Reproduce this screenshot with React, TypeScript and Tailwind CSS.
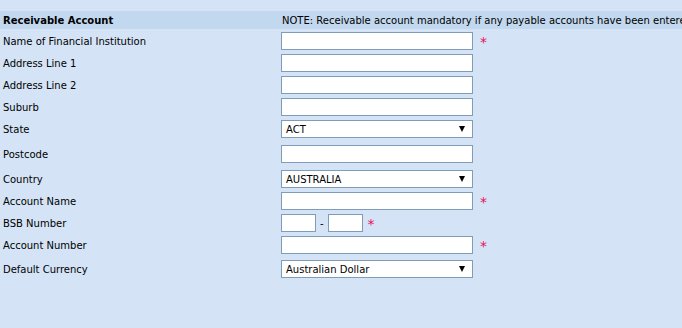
import React from "react";

type Field = {
  label: string;
  kind: "text" | "select" | "bsb";
  value?: string;
  required?: boolean;
  rowClass: string;
};

const fields: Field[] = [
  { label: "Name of Financial Institution", kind: "text", required: true, rowClass: "h-[22px]" },
  { label: "Address Line 1", kind: "text", rowClass: "h-[22px]" },
  { label: "Address Line 2", kind: "text", rowClass: "h-[22px]" },
  { label: "Suburb", kind: "text", rowClass: "h-[22px]" },
  { label: "State", kind: "select", value: "ACT", rowClass: "h-[22px]" },
  { label: "Postcode", kind: "text", rowClass: "h-[28px]" },
  { label: "Country", kind: "select", value: "AUSTRALIA", rowClass: "h-[22px]" },
  { label: "Account Name", kind: "text", required: true, rowClass: "h-[22px]" },
  { label: "BSB Number", kind: "bsb", required: true, rowClass: "h-[22px]" },
  { label: "Account Number", kind: "text", required: true, rowClass: "h-[22px]" },
  { label: "Default Currency", kind: "select", value: "Australian Dollar", rowClass: "h-[26px]" },
];

// red required marker
const Star = ({ gap }: { gap: string }) => (
  <span className={`${gap} text-[14px] leading-none text-[#e8105a] mt-[1px]`}>*</span>
);

const Control = ({ field }: { field: Field }) => {
  if (field.kind === "bsb") {
    return (
      <div className="flex items-center">
        <div className="w-[35px] h-[18px] bg-white border border-[#7f9db9]" />
        <span className="mx-[4px] text-[10px]">-</span>
        <div className="w-[35px] h-[18px] bg-white border border-[#7f9db9]" />
        {field.required && <Star gap="ml-[5px]" />}
      </div>
    );
  }
  if (field.kind === "select") {
    return (
      <div className="flex items-center">
        <div className="w-[192px] h-[18px] bg-white border border-[#7f9db9] flex items-center justify-between pl-[4px] pr-[7px]">
          <span className="text-[10px] leading-none mt-[1px]">{field.value}</span>
          <span className="w-0 h-0 border-l-[3px] border-r-[3px] border-t-[6px] border-l-transparent border-r-transparent border-t-black" />
        </div>
      </div>
    );
  }
  return (
    <div className="flex items-center">
      <div className="w-[192px] h-[18px] bg-white border border-[#7f9db9]" />
      {field.required && <Star gap="ml-[7px]" />}
    </div>
  );
};

const App = () => {
  return (
    <div
      className="w-full min-h-screen bg-[#d4e4f6] text-black overflow-hidden"
      style={{ fontFamily: '"DejaVu Sans", Verdana, sans-serif' }}
    >
      <div className="h-[11px]" />
      <div className="h-[18px] bg-[#c2d8ef] flex items-center text-[10px] whitespace-nowrap overflow-hidden">
        <div className="w-[281px] shrink-0 pl-[3px] font-bold">Receivable Account</div>
        <div className="pl-[1px]">
          NOTE: Receivable account mandatory if any payable accounts have been entered
        </div>
      </div>
      <div className="h-[1px]" />
      {fields.map((f) => (
        <div key={f.label} className={`flex items-center ${f.rowClass}`}>
          <div className="w-[281px] shrink-0 pl-[3px] text-[10px]">{f.label}</div>
          <Control field={f} />
        </div>
      ))}
    </div>
  );
};

export default App;
